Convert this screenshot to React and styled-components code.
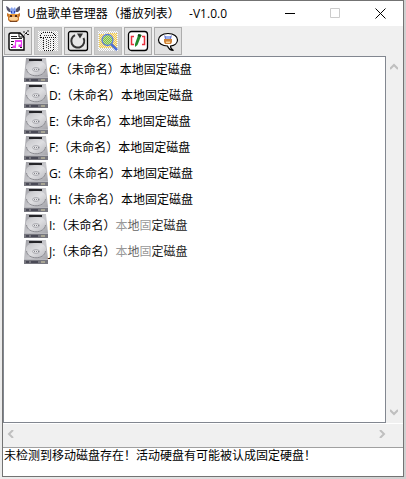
import React from "react";
import styled, { createGlobalStyle } from "styled-components";

const drives = [
  { letter: "C" },
  { letter: "D" },
  { letter: "E" },
  { letter: "F" },
  { letter: "G" },
  { letter: "H" },
  { letter: "I", faded: true },
  { letter: "J", faded: true },
];

const LogoIcon = () => (
  <svg width="16" height="16" viewBox="0 0 16 16" aria-hidden="true">
    <path d="M0 0l2 1 2 2 1 3H3L1 4z" fill="#55556e" />
    <path d="M14 0l-2 1-2 2-1 3h3l2-2z" fill="#55556e" />
    <path d="M4 3l2-2 1 2 2-2 1 3-1 4H5z" fill="#86a2ee" />
    <path d="M5 5h1v2H5zM8 5h1v2H8z" fill="#2848b8" />
    <path d="M1 7l2 1h9l2-1v3l-1 1v3l-2 2H4l-2-2v-3l-1-1z" fill="#c8782e" />
    <path d="M3 8h9v2H3z" fill="#e89a3c" />
    <ellipse cx="7.500" cy="12.500" rx="4.500" ry="2" fill="#fbd39a" />
    <path d="M4 9h2v2H4zM9 9h2v2H9z" fill="#4e2b19" />
    <path d="M4 15h7v1H4z" fill="#7a4520" />
  </svg>
);

const PlaylistIcon = () => (
  <svg width="24" height="24" viewBox="0 0 24 24" aria-hidden="true">
    <path d="M5 4h9l4 4v13H5q-2 0-2-2V6q0-2 2-2z" fill="#fff" stroke="#000" strokeWidth="1.400" />
    <path d="M13 4v4h5" fill="none" stroke="#000" />
    <path d="M5 7.500h6M5 9.500h11M5 12.500h3M5 15.500h2M5 18.500h2M14 18.500h2" stroke="#222" />
    <path d="M9.500 17v-5.500h6V16M9 12.500h7" fill="none" stroke="#e83cf0" strokeWidth="1.200" />
    <path d="M6.500 16.500h3.500v2.500H6.500zM12.500 15.500H16V18h-3.500z" fill="#e83cf0" />
    <path d="M17 2.500h2v1h-2zM19 4h2v1h-2zM21 1.500h2v1h-2zM20 3h1v1h-1zM21 5h2v1h-2zM18 5.500h1v1h-1z" fill="#222" />
  </svg>
);

const TrashIcon = () => (
  <svg width="24" height="24" viewBox="0 0 24 24" shapeRendering="crispEdges" aria-hidden="true">
    <defs>
      <pattern id="dither" width="2" height="2" patternUnits="userSpaceOnUse">
        <path d="M0 0h1v1H0zM1 1h1v1H1z" fill="#fff" />
      </pattern>
    </defs>
    <path d="M2 2h20v20H2z" fill="url(#dither)" />
    <path d="M5 5l3-2h7l4 3v3h-2v12H8V9H5z" fill="#f2f2f2" />
    <path
      d="M4.500 8.500v-3l3-2h8l4 2v3zM7.500 9v12h10V9"
      fill="none"
      stroke="#111"
      strokeDasharray="1 1"
    />
    <path d="M8 6.500h9M10.500 10v10M12.500 11v9M14.500 10v10" stroke="#444" strokeDasharray="1 1" />
  </svg>
);

const ReloadIcon = () => (
  <svg width="24" height="24" viewBox="0 0 24 24" aria-hidden="true">
    <rect x="2.500" y="2.500" width="19" height="19" rx="2" fill="#e6e6e6" stroke="#000" strokeWidth="1.300" />
    <path d="M9 6.200a6.500 6.500 0 1 0 8.500 2.800" fill="none" stroke="#333" strokeWidth="2" />
    <path d="M11 4.500h6l-3 5z" fill="#333" />
  </svg>
);

const SearchFolderIcon = () => (
  <svg width="24" height="24" viewBox="0 0 24 24" aria-hidden="true">
    <defs>
      <pattern id="folderDots" width="2" height="2" patternUnits="userSpaceOnUse">
        <path d="M0 0h1v1H0zM1 1h1v1H1z" fill="#f2c84c" />
      </pattern>
      <pattern id="lensDots" width="2" height="2" patternUnits="userSpaceOnUse">
        <path d="M0 0h2v2H0z" fill="#c4dc9a" />
        <path d="M0 0h1v1H0zM1 1h1v1H1z" fill="#7cc444" />
      </pattern>
    </defs>
    <path d="M2 2h20v20H2z" fill="url(#dither)" />
    <path d="M3 5h7l2-1h9v15H3z" fill="#f6ebc0" />
    <path d="M3 5h7l2-1h9v15H3z" fill="url(#folderDots)" />
    <path d="M15 15l6 6" stroke="#4a6ed8" strokeWidth="2.500" />
    <circle cx="11.500" cy="11" r="5.500" fill="url(#lensDots)" stroke="#5a7ce0" strokeWidth="1.300" />
  </svg>
);

const EditIcon = () => (
  <svg width="24" height="24" viewBox="0 0 24 24" aria-hidden="true">
    <rect x="2.500" y="2.500" width="19" height="19" rx="3" fill="#fff" stroke="#000" strokeWidth="1.300" />
    <path d="M8 7.500H5.500v8H8M16 7.500h2.500v8H16" fill="none" stroke="#e8303c" strokeWidth="1.500" />
    <path d="M12.500 5l3 1-4 10-2.500 2v-3z" fill="#238a2c" />
    <path d="M12.500 5l3 1-1 2-3-1z" fill="#144f19" />
  </svg>
);

const AboutIcon = () => (
  <svg width="24" height="24" viewBox="0 0 24 24" aria-hidden="true">
    <path
      d="M12 4.500c6 0 9.500 3 9.500 6.500 0 3-3 5.500-7 6 0 2 1 3.500 3 4.500-3 0-5-2-6-4.500-5 0-9-2.500-9-6s3.500-6.500 9.500-6.500z"
      fill="#fff"
      stroke="#000"
      strokeWidth="1.200"
    />
    <path d="M8 6l3 2v2H9zM16 6l-3 2v2h2z" fill="#6e7ecf" />
    <path d="M10 7h4v3h-4z" fill="#9bb0f0" />
    <path d="M8 10h8v3l-1 2H9l-1-2z" fill="#cf8338" />
    <path d="M10 12.500h4V14h-4z" fill="#f8d59c" />
  </svg>
);

const DriveIcon = () => (
  <svg width="24" height="24" viewBox="0 0 24 24" aria-hidden="true">
    <defs>
      <linearGradient id="metal" x2="1" y2="1">
        <stop stopColor="#9c9ca2" />
        <stop offset=".5" stopColor="#cacace" />
        <stop offset="1" stopColor="#9a9aa0" />
      </linearGradient>
      <linearGradient id="platter" x2="1" y2="1">
        <stop stopColor="#c2c2c6" />
        <stop offset=".5" stopColor="#dfdfe2" />
        <stop offset="1" stopColor="#b8b8bd" />
      </linearGradient>
    </defs>
    <path d="M2 0h20l2 19v5H0v-5z" fill="url(#metal)" />
    <path d="M5 1h13v2H5z" fill="#252529" />
    <path d="M2 9c0-8 20-8 20 0 0 5-3 9-10 9S2 14 2 9z" fill="url(#platter)" />
    <path d="M2.500 11c1 9 18 9 19 0" fill="none" stroke="#8c8c92" />
    <ellipse cx="12" cy="11.500" rx="3.500" ry="1.800" fill="#e8e8ea" stroke="#a4a4aa" />
    <path d="M10 11.500h1M12 11.500h1M14 11.500h1" stroke="#85858c" />
    <path d="M0 20h24v4H0z" fill="#77777f" />
    <path d="M0 19h24v1H0z" fill="#b8b8bd" />
    <path d="M2 21h3v2H2zM7 21h7v2H7z" fill="#4a4a56" />
    <path d="M17 21h4v2h-4z" fill="#a8a594" />
  </svg>
);

const chevrons = {
  up: "M0 7l4-4 4 4",
  down: "M0 1l4 4 4-4",
  left: "M6 0L2 4l4 4",
  right: "M2 0l4 4-4 4",
};

const Chevron = ({ direction }) => (
  <svg width="8" height="8" viewBox="0 0 8 8" aria-hidden="true">
    <path d={chevrons[direction]} fill="none" stroke="#bfbfbf" strokeWidth="2" />
  </svg>
);

const tools = [
  { label: "播放列表", icon: PlaylistIcon },
  { label: "删除", icon: TrashIcon, disabled: true },
  { label: "刷新", icon: ReloadIcon },
  { label: "查找", icon: SearchFolderIcon, disabled: true },
  { label: "编辑", icon: EditIcon },
  { label: "关于", icon: AboutIcon },
];

const App = () => {
  return (
    <Desktop>
      <GlobalStyle />
      <Window>
        <TitleBar>
          <LogoIcon />
          <Title>{"U盘歌单管理器（播放列表）   -V1.0.0"}</Title>
          <Caption aria-label="最小化">
            <svg width="11" height="11" aria-hidden="true">
              <path d="M0 5.500h10" stroke="#000" />
            </svg>
          </Caption>
          <Caption aria-label="最大化" disabled>
            <svg width="11" height="11" aria-hidden="true">
              <path d="M.5.500h9v9h-9z" fill="none" stroke="#ccc" />
            </svg>
          </Caption>
          <Caption aria-label="关闭">
            <svg width="11" height="11" aria-hidden="true">
              <path d="M.5.500l10 10M10.500.500l-10 10" stroke="#000" />
            </svg>
          </Caption>
        </TitleBar>
        <Toolbar>
          {tools.map(({ label, icon: Icon, disabled }) => (
            <ToolButton key={label} aria-label={label} disabled={disabled}>
              <Icon />
            </ToolButton>
          ))}
        </Toolbar>
        <Content>
          <DriveList>
            {drives.map(({ letter, faded }) => (
              <Drive key={letter}>
                <DriveIcon />
                <span>
                  {letter}:（未命名）
                  {faded ? (
                    <>
                      <Faded>本</Faded>
                      <Faded $tone="#666">地</Faded>
                      <Faded>固</Faded>
                      <Faded $tone="#222">定磁盘</Faded>
                    </>
                  ) : (
                    "本地固定磁盘"
                  )}
                </span>
              </Drive>
            ))}
          </DriveList>
          <VerticalBar>
            <ScrollButton aria-label="向上滚动" disabled>
              <Chevron direction="up" />
            </ScrollButton>
            <ScrollButton aria-label="向下滚动" disabled>
              <Chevron direction="down" />
            </ScrollButton>
          </VerticalBar>
        </Content>
        <HorizontalBar>
          <ScrollButton aria-label="向左滚动" disabled>
            <Chevron direction="left" />
          </ScrollButton>
          <ScrollButton aria-label="向右滚动" disabled>
            <Chevron direction="right" />
          </ScrollButton>
        </HorizontalBar>
        <Status>未检测到移动磁盘存在！活动硬盘有可能被认成固定硬盘！</Status>
      </Window>
    </Desktop>
  );
};

export default App;

const GlobalStyle = createGlobalStyle`
  * {
    box-sizing: border-box;
  }

  body {
    margin: 0;
    font-family: "Open Sans", "Noto Sans CJK SC", sans-serif;
    font-size: 12px;
    color: #000;
  }

  button {
    display: flex;
    justify-content: center;
    align-items: center;
    padding: 0;
    border: 0;
    background: none;
  }

  svg {
    display: block;
    flex-shrink: 0;
  }
`;

const Desktop = styled.div`
  display: flex;
  min-height: 100vh;
  padding: 0 2px 2px;
  background: linear-gradient(90deg, #ececec, #d0d0d0);
`;

const Window = styled.main`
  display: flex;
  flex-direction: column;
  flex: 1;
  min-width: 0;
  border: 1px solid #737373;
  background: #f0f0f0;
`;

const TitleBar = styled.header`
  display: flex;
  align-items: center;
  height: 25px;
  padding-left: 3px;
  background: #fff;
`;

const Title = styled.h1`
  flex: 1;
  margin: 0 0 0 5px;
  font-size: 12px;
  font-weight: 400;
  line-height: 24px;
  white-space: pre;
`;

const Caption = styled.button`
  width: 45px;
  height: 24px;
`;

const Toolbar = styled.div`
  display: flex;
  gap: 2px;
  padding: 1px;
`;

const ToolButton = styled.button`
  && {
    width: 28px;
    height: 28px;
    border: 1px solid ${({ disabled }) => (disabled ? "#bfbfbf" : "#adadad")};
    background: ${({ disabled }) => (disabled ? "#ccc" : "#e1e1e1")};
  }
`;

const Content = styled.div`
  display: flex;
  flex: 1;
`;

const DriveList = styled.ul`
  flex: 1;
  margin: 0;
  padding: 0 0 0 20px;
  border: 1px solid #828790;
  background: #fff;
  list-style: none;
`;

const Drive = styled.li`
  display: flex;
  align-items: center;
  gap: 1px;
  height: 26px;
  line-height: 24px;
  white-space: nowrap;
`;

const Faded = styled.span`
  color: ${({ $tone }) => $tone || "#999"};
`;

const VerticalBar = styled.div`
  display: flex;
  flex-direction: column;
  justify-content: space-between;
  width: 17px;
`;

const HorizontalBar = styled.div`
  display: flex;
  justify-content: space-between;
  height: 24px;
  padding-right: 13px;
  border-top: 1px solid #fff;
`;

const ScrollButton = styled.button`
  width: 16px;
  height: 20px;
`;

const Status = styled.footer`
  min-height: 29px;
  padding-left: 1px;
  border-top: 1px solid #a0a0a0;
  background: #fff;
  line-height: 16px;
`;
